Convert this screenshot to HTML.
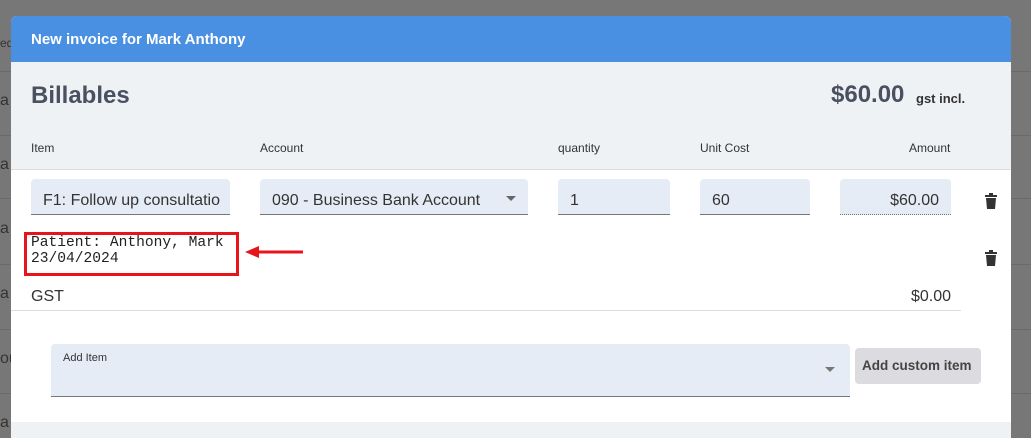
<!DOCTYPE html>
<html><head><meta charset="utf-8"><style>
*{margin:0;padding:0;box-sizing:border-box}
body{width:1031px;height:438px;background:#777;position:relative;overflow:hidden;font-family:"Liberation Sans",Arial,sans-serif}
.a{position:absolute}
.bgl{position:absolute;height:1px;background:#6a6a6a}
.modal{position:absolute;left:11px;top:16px;width:1000px;height:422px;background:#fff;border-radius:6px 6px 0 0;overflow:hidden}
.hdr{position:absolute;left:0;top:0;width:1000px;height:46px;background:#4a90e2;color:#fff;font-weight:bold;font-size:15px;padding:15px 0 0 20px}
.top{position:absolute;left:0;top:46px;width:1000px;height:108px;background:#eff2f5;border-bottom:1px solid #ddd}
.lbl{position:absolute;font-size:12px;color:#333}
.fld{position:absolute;background:#e6ecf6;border-bottom:1px solid #777;border-radius:4px 4px 0 0;font-size:16px;color:#333;padding:13px 12px 0}
.trash{position:absolute;width:12px;height:16px}
</style></head><body>
<div class="a" style="left:0;top:36px;font-size:12px;color:#333">ed</div>
<div class="a" style="left:0;top:92px;font-size:16px;color:#333">a</div>
<div class="a" style="left:0;top:156px;font-size:16px;color:#333">a</div>
<div class="a" style="left:0;top:220px;font-size:16px;color:#333">a</div>
<div class="a" style="left:0;top:285px;font-size:16px;color:#333">a</div>
<div class="a" style="left:0;top:350px;font-size:16px;color:#333">ou</div>
<div class="a" style="left:0;top:414px;font-size:16px;color:#333">a</div>
<div class="bgl" style="left:0;top:71px;width:11px"></div><div class="bgl" style="left:0;top:135px;width:11px"></div><div class="bgl" style="left:0;top:198px;width:11px"></div><div class="bgl" style="left:0;top:264px;width:11px"></div><div class="bgl" style="left:0;top:329px;width:11px"></div><div class="bgl" style="left:0;top:393px;width:11px"></div>
<div class="bgl" style="left:1011px;top:71px;width:20px"></div><div class="bgl" style="left:1011px;top:135px;width:20px"></div><div class="bgl" style="left:1011px;top:198px;width:20px"></div><div class="bgl" style="left:1011px;top:264px;width:20px"></div><div class="bgl" style="left:1011px;top:329px;width:20px"></div><div class="bgl" style="left:1011px;top:393px;width:20px"></div>
<div class="modal">
<div class="hdr">New invoice for Mark Anthony</div>
<div class="top"></div>
<div class="a" style="left:20px;top:66px;font-size:24px;font-weight:bold;color:#4a5060">Billables</div>
<div class="a" style="left:820px;top:65px;font-size:24px;font-weight:bold;color:#4a5060">$60.00</div>
<div class="a" style="left:905px;top:75px;font-size:13px;font-weight:bold;color:#333">gst incl.</div>
<div class="lbl" style="left:20px;top:125px">Item</div>
<div class="lbl" style="left:249px;top:125px">Account</div>
<div class="lbl" style="left:547px;top:125px">quantity</div>
<div class="lbl" style="left:689px;top:125px">Unit Cost</div>
<div class="lbl" style="left:898px;top:125px">Amount</div>
<div class="fld" style="left:20px;top:163px;width:199px;height:36px;overflow:hidden;white-space:nowrap">F1: Follow up consultatio</div>
<div class="fld" style="left:249px;top:163px;width:268px;height:36px">090 - Business Bank Account<span class="a" style="right:12px;top:17px;border:5px solid transparent;border-top-color:#666;border-bottom:0"></span></div>
<div class="fld" style="left:547px;top:163px;width:112px;height:36px">1</div>
<div class="fld" style="left:689px;top:163px;width:110px;height:36px">60</div>
<div class="fld" style="left:829px;top:163px;width:111px;height:36px;text-align:right;border-bottom:1px dotted #777">$60.00</div>
<svg class="trash" style="left:974px;top:177px" viewBox="0 0 12 16"><rect x="0" y="2" width="12" height="2" fill="#333"/><rect x="4" y="0" width="4" height="2" fill="#333"/><path d="M1 5h10l-1 11H2z" fill="#333"/></svg>
<svg class="trash" style="left:974px;top:234px" viewBox="0 0 12 16"><rect x="0" y="2" width="12" height="2" fill="#333"/><rect x="4" y="0" width="4" height="2" fill="#333"/><path d="M1 5h10l-1 11H2z" fill="#333"/></svg>
<div class="a" style="left:13px;top:216px;width:215px;height:44px;border:3px solid #e8141c"></div>
<div class="a" style="left:20px;top:219px;font-family:'Liberation Mono',monospace;font-size:14.6px;line-height:16px;color:#222">Patient: Anthony, Mark<br>23/04/2024</div>
<svg class="a" style="left:232px;top:228px" width="64" height="16"><path d="M60 8H14" stroke="#e8141c" stroke-width="3"/><path d="M2 8L16 2V14Z" fill="#e8141c"/></svg>
<div class="a" style="left:20px;top:272px;font-size:16px;color:#333">GST</div>
<div class="a" style="left:900px;top:272px;font-size:16px;color:#333">$0.00</div>
<div class="a" style="left:0;top:294px;width:950px;height:1px;background:#ddd"></div>
<div class="fld" style="left:40px;top:328px;width:799px;height:53px;font-size:11px;padding:8px 12px">Add Item<span class="a" style="right:15px;top:23px;border:5px solid transparent;border-top-color:#777;border-bottom:0"></span></div>
<div class="a" style="left:844px;top:332px;width:126px;height:36px;background:#dcdce0;border-radius:4px;font-size:13.5px;font-weight:bold;color:#444;padding:10px 0 0 7px">Add custom item</div>
<div class="a" style="left:0;top:406px;width:1000px;height:16px;background:#eff2f5"></div>
</div>
</body></html>
